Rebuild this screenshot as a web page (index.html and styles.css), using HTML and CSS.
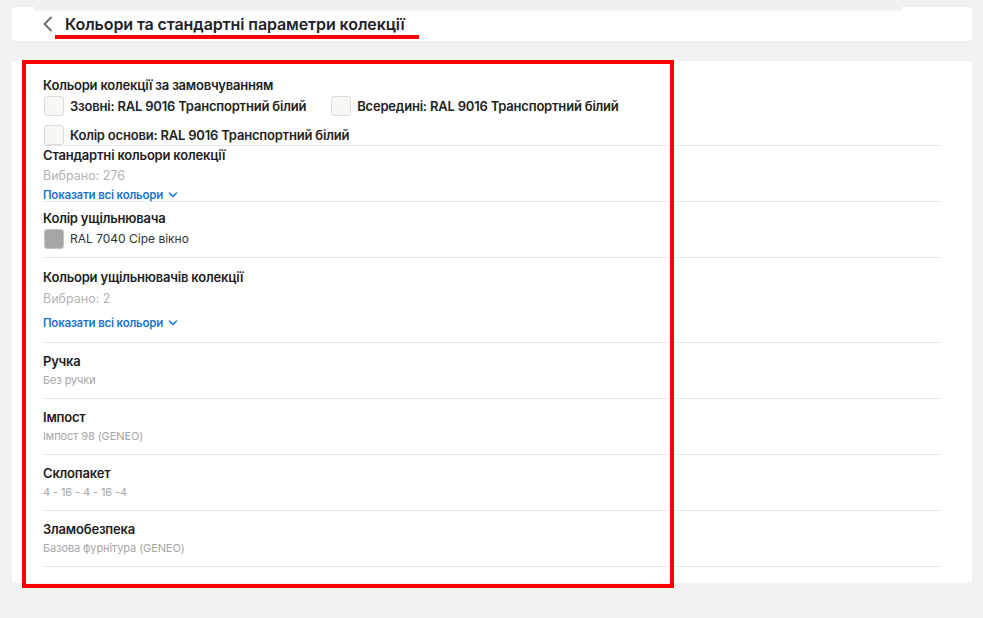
FILE: index.html
```html
<!DOCTYPE html>
<html lang="uk">
<head>
    <meta charset="UTF-8">
    <meta name="viewport" content="width=device-width, initial-scale=1.0">
    <title>Кольори та стандартні параметри колекції</title>
    <link rel="stylesheet" href="styles.css">
</head>
<body>
<div class="page">
    <header class="topbar">
        <button class="back" type="button" aria-label="Назад">
            <svg width="12" height="16" viewBox="0 0 12 16"><path d="M9 1.5 L2.5 8 L9 14.5" fill="none" stroke="#6b6f76" stroke-width="2" stroke-linecap="round" stroke-linejoin="round"/></svg>
        </button>
        <h1 class="title">Кольори та стандартні параметри колекції</h1>
    </header>

    <main class="card">
        <section class="group group-defaults">
            <div class="label">Кольори колекції за замовчуванням</div>
            <div class="swatches">
                <div class="swatch-item"><span class="swatch"></span>Ззовні: RAL 9016 Транспортний білий</div>
                <div class="swatch-item"><span class="swatch"></span>Всередині: RAL 9016 Транспортний білий</div>
                <div class="swatch-item"><span class="swatch"></span>Колір основи: RAL 9016 Транспортний білий</div>
            </div>
        </section>

        <section class="group group-standard">
            <div class="label">Стандартні кольори колекції</div>
            <div class="count">Вибрано: 276</div>
            <a class="more more-tight" href="#">Показати всі кольори
                <svg width="10" height="6" viewBox="0 0 10 6"><path d="M1.5 1 L5 4.5 L8.5 1" fill="none" stroke="#1b74d0" stroke-width="1.5" stroke-linecap="round" stroke-linejoin="round"/></svg>
            </a>
        </section>

        <section class="group group-seal">
            <div class="label">Колір ущільнювача</div>
            <div class="swatch-item plain"><span class="swatch grey"></span>RAL 7040 Сіре вікно</div>
        </section>

        <section class="group group-seals">
            <div class="label">Кольори ущільнювачів колекції</div>
            <div class="count">Вибрано: 2</div>
            <a class="more" href="#">Показати всі кольори
                <svg width="10" height="6" viewBox="0 0 10 6"><path d="M1.5 1 L5 4.5 L8.5 1" fill="none" stroke="#1b74d0" stroke-width="1.5" stroke-linecap="round" stroke-linejoin="round"/></svg>
            </a>
        </section>

        <section class="group param">
            <div class="label">Ручка</div>
            <div class="value">Без ручки</div>
        </section>

        <section class="group param">
            <div class="label">Імпост</div>
            <div class="value">Імпост 98 (GENEO)</div>
        </section>

        <section class="group param">
            <div class="label">Склопакет</div>
            <div class="value">4 - 16 - 4 - 16 -4</div>
        </section>

        <section class="group param">
            <div class="label">Зламобезпека</div>
            <div class="value">Базова фурнітура (GENEO)</div>
        </section>
    </main>

    <span class="mark-line"></span>
    <span class="mark-box"></span>
</div>
</body>
</html>
```

FILE: styles.css
```css
body {
    margin: 0;
    background: #f1f1f1;
    font-family: Inter, "Noto Sans", sans-serif;
    color: #1d1d1f;
}

.page {
    position: relative;
    padding: 7px 11px 0 12px;
    height: 611px;
}

.topbar {
    position: relative;
    display: flex;
    align-items: center;
    height: 34px;
    padding-left: 30px;
    background: #fff;
    border-radius: 4px;
}

/* faint scroll shadow along the top of the bar */
.topbar::before {
    content: "";
    position: absolute;
    left: 22px;
    right: 70px;
    top: 0;
    height: 6px;
    background: linear-gradient(#ececec, rgba(255, 255, 255, 0));
}

.back {
    display: flex;
    align-items: center;
    padding: 0;
    border: none;
    background: none;
    width: 12px;
    height: 16px;
    margin-top: -1px;
}

.title {
    margin: 0 0 0 11px;
    font-size: 16px;
    font-weight: 600;
    letter-spacing: -0.1px;
    color: #1f2228;
    line-height: 20px;
}

.card {
    margin-top: 20px;
    background: #fff;
    border-radius: 4px;
    padding: 15px 32px 16px 31px;
}

.group {
    border-bottom: 1px solid #e9e9e9;
}

.label {
    font-size: 13px;
    font-weight: 600;
    letter-spacing: -0.2px;
    line-height: 18px;
    color: #1d1d1f;
}

.swatches {
    display: flex;
    flex-wrap: wrap;
    column-gap: 24px;
    row-gap: 9px;
    margin-top: 2px;
}

.swatch-item {
    display: flex;
    align-items: center;
    gap: 6px;
    font-size: 13px;
    font-weight: 600;
    letter-spacing: -0.2px;
    line-height: 20px;
    color: #222;
}

.swatch-item.plain {
    font-size: 12px;
    font-weight: 400;
    letter-spacing: 0;
    color: #333;
    margin-top: 2px;
}

.swatch {
    width: 18px;
    height: 18px;
    border: 1px solid #dcdcdc;
    border-radius: 3px;
    background: #f6f8f3;
    margin-left: 1px;
}

.swatch.grey {
    background: #a3a5a7;
    border-color: #c4c4c4;
}

.count {
    font-size: 12.5px;
    line-height: 18px;
    color: #b3b3b3;
}

.more {
    display: flex;
    align-items: center;
    gap: 5px;
    font-size: 11.5px;
    font-weight: 600;
    letter-spacing: -0.2px;
    line-height: 18px;
    color: #1b74d0;
    text-decoration: none;
}

.group-standard .count {
    margin-top: 3px;
}

.more-tight {
    margin-top: 4px;
    line-height: 12px;
}

.group-seal {
    padding: 7px 0 8px;
}

.group-seals {
    padding: 10px 0 10px;
}

.group-seals .count {
    margin-top: 4px;
}

.group-seals .more {
    margin-top: 6px;
}

.param {
    padding: 9px 0;
}

.value {
    margin-top: 1px;
    font-size: 11px;
    letter-spacing: -0.1px;
    line-height: 18px;
    color: #a6a6a6;
}

/* red review marks */
.mark-line {
    position: absolute;
    left: 55px;
    top: 35px;
    width: 364px;
    height: 4px;
    background: #ff0000;
}

.mark-box {
    position: absolute;
    left: 22px;
    top: 60px;
    width: 644px;
    height: 520px;
    border: 4px solid #ff0000;
}
```
